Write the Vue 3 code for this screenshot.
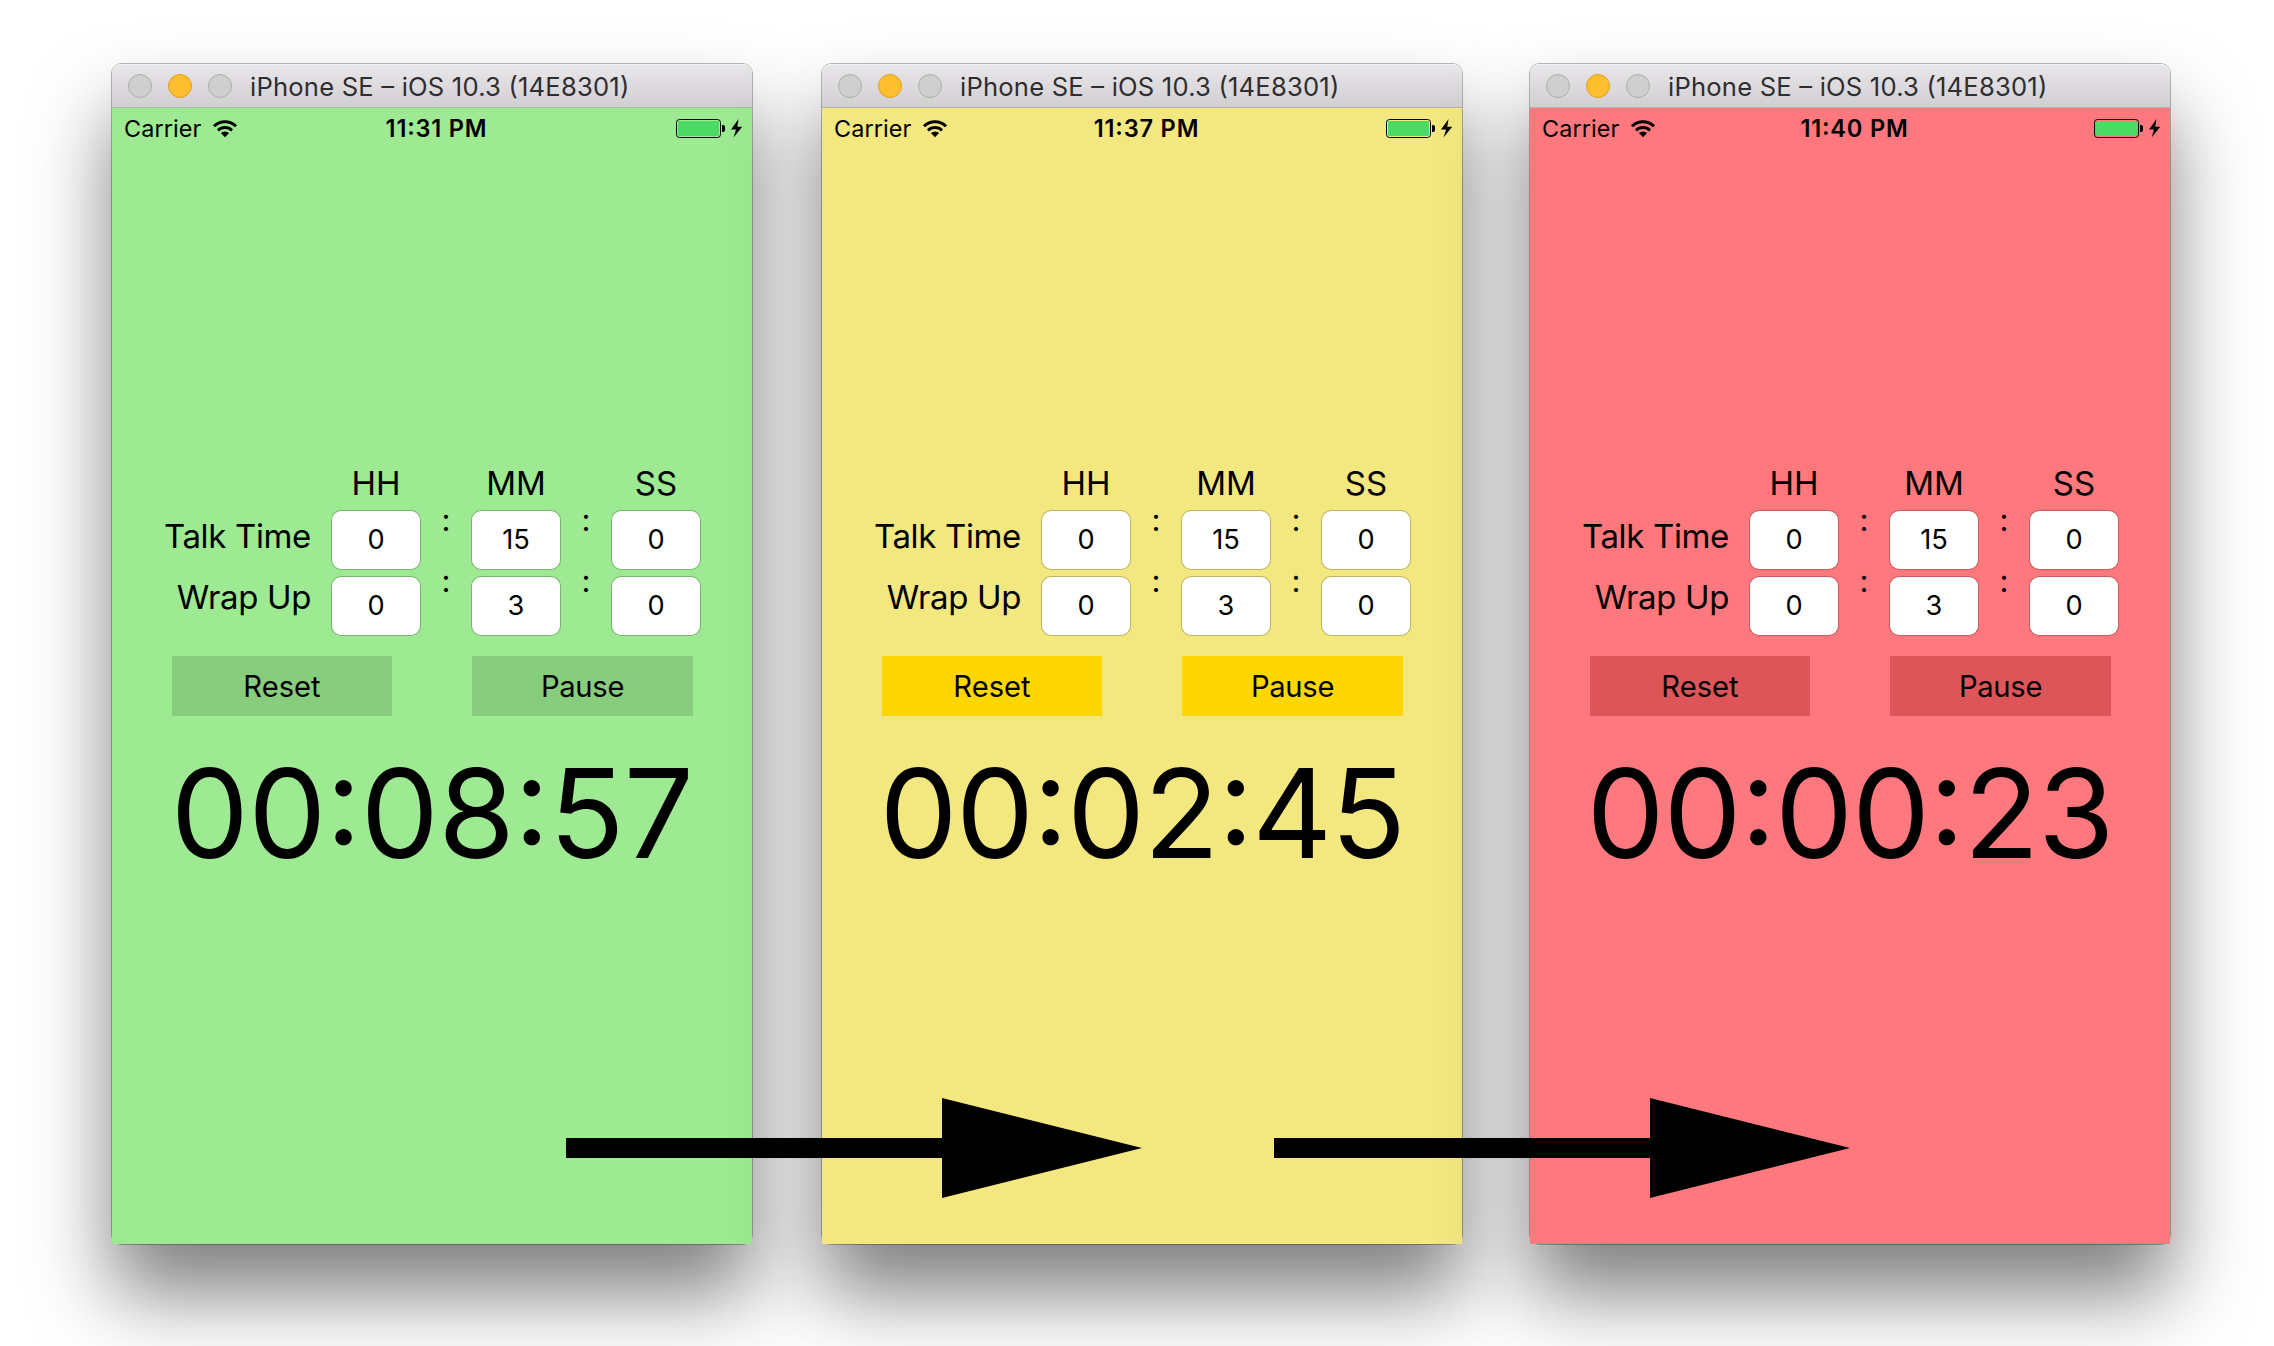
<script setup>
const title = 'iPhone SE – iOS 10.3 (14E8301)'
const columns = [
  { head: 'HH', talk: '0', wrap: '0' },
  { head: 'MM', talk: '15', wrap: '3' },
  { head: 'SS', talk: '0', wrap: '0' },
]
const phones = [
  { theme: 'green', clock: '11:31 PM', left: '00:08:57' },
  { theme: 'yellow', clock: '11:37 PM', left: '00:02:45' },
  { theme: 'red', clock: '11:40 PM', left: '00:00:23' },
]
</script>

<template>
  <main class="stage">
    <section v-for="p in phones" :key="p.theme" class="window" :class="p.theme">
      <header class="titlebar">
        <i class="light"></i>
        <i class="light amber"></i>
        <i class="light"></i>
        <span class="title">{{ title }}</span>
      </header>
      <div class="screen">
        <div class="status">
          <div class="side">
            <span class="carrier">Carrier</span>
            <svg class="wifi" width="26" height="19" viewBox="0 0 26 19">
              <path d="M2 7.2 A15.6 15.6 0 0 1 24 7.2" fill="none" stroke="#000" stroke-width="3" />
              <path d="M6 11.4 A9.9 9.9 0 0 1 20 11.4" fill="none" stroke="#000" stroke-width="2.8" />
              <path d="M13 18.2 L8.9 14.1 A5.8 5.8 0 0 1 17.1 14.1 Z" />
            </svg>
          </div>
          <span class="clock">{{ p.clock }}</span>
          <div class="side end">
            <svg class="battery" width="68" height="20" viewBox="0 0 68 20">
              <rect x="0.5" y="0.5" width="44" height="18" rx="3" fill="none" stroke="#000" />
              <rect x="2" y="2" width="41" height="15" rx="1.5" fill="#4cd964" />
              <path d="M46 6 h1 a2 2 0 0 1 2 2 v3 a2 2 0 0 1 -2 2 h-1 Z" />
              <path d="M62.6 0 L55 10.4 H60 L57.6 18.6 L66.2 7.8 H61.2 Z" />
            </svg>
          </div>
        </div>

        <div class="form">
          <div class="labels">
            <span>Talk Time</span>
            <span>Wrap Up</span>
          </div>
          <template v-for="(c, i) in columns" :key="c.head">
            <div v-if="i" class="colons"><span>:</span><span>:</span></div>
            <div class="column">
              <span class="head">{{ c.head }}</span>
              <div class="field">{{ c.talk }}</div>
              <div class="field">{{ c.wrap }}</div>
            </div>
          </template>
        </div>

        <div class="buttons">
          <button type="button">Reset</button>
          <button type="button" class="pause">Pause</button>
        </div>
        <div class="timer">{{ p.left }}</div>
      </div>
    </section>

    <svg class="arrows" width="2274" height="1346" viewBox="0 0 2274 1346">
      <path d="M566 1138 H942 V1098 L1142 1148 L942 1198 V1158 H566 Z" />
      <path d="M1274 1138 H1650 V1098 L1850 1148 L1650 1198 V1158 H1274 Z" />
    </svg>
  </main>
</template>

<style>
body {
  margin: 0;
  background: #fff;
}
</style>

<style scoped>
.stage {
  position: relative;
  display: flex;
  align-items: flex-start;
  box-sizing: border-box;
  width: 2274px;
  height: 1346px;
  padding: 64px 0 0 112px;
  overflow: hidden;
  font-family: Inter, "Liberation Sans", sans-serif;
  font-feature-settings: "calt" 1;
  color: #000;
}
.window {
  flex: none;
  width: 640px;
  margin-right: 68px;
  border-radius: 10px;
  box-shadow: 0 0 0 1px rgba(0, 0, 0, 0.27), 0 50px 80px rgba(0, 0, 0, 0.5);
}
.green { --bg: #9dea92; --btn: #88cd7e; --track: -0.65px; margin-right: 70px; }
.yellow { --bg: #f3e780; --btn: #ffd700; --track: -1.4px; }
.red { --bg: #ff787d; --btn: #dd5459; --track: -1.1px; margin-right: 0; }

.titlebar {
  display: flex;
  align-items: center;
  gap: 16px;
  box-sizing: border-box;
  height: 44px;
  padding-left: 16px;
  border-bottom: 1px solid #b3b1b4;
  border-radius: 9px 9px 0 0;
  background: linear-gradient(#e9e7ea, #d1cfd2);
  box-shadow: inset 0 1px 0 #f5f4f6;
}
.light {
  box-sizing: border-box;
  width: 24px;
  height: 24px;
  border: 1px solid #adadad;
  border-radius: 50%;
  background: #cfcfcf;
}
.light.amber {
  border-color: #dfa023;
  background: #ffbe2e;
}
.title {
  margin-left: 2px;
  padding-top: 2px;
  font-size: 25.6px;
  letter-spacing: 0.2px;
  color: #2e2d30;
  white-space: pre;
}
.screen {
  height: 1136px;
  background: var(--bg);
}
.status {
  display: flex;
  align-items: center;
  height: 40px;
  padding: 0 8px 0 12px;
}
.side {
  display: flex;
  flex: 1;
  align-items: center;
}
.end { justify-content: flex-end; }
.carrier {
  font-size: 23.4px;
  letter-spacing: 0.1px;
}
.wifi { margin-left: 11px; }
.battery { padding-top: 1px; }
.clock {
  margin-left: 5px;
  font-size: 23.6px;
  font-weight: 600;
  letter-spacing: 0.8px;
}
.form {
  display: flex;
  align-items: flex-start;
  padding-top: 315px;
}
.labels {
  display: flex;
  flex-direction: column;
  width: 199px;
  margin: 43px 20px 0 0;
  font-size: 33px;
  letter-spacing: -0.35px;
  line-height: 61px;
  text-align: right;
}
.column {
  display: flex;
  flex-direction: column;
  gap: 6px;
  width: 90px;
}
.head {
  margin-bottom: 1px;
  font-size: 33px;
  line-height: 40px;
  text-align: center;
}
.field {
  box-sizing: border-box;
  height: 60px;
  border: 1px solid rgba(0, 0, 0, 0.22);
  border-radius: 10px;
  background: #fff;
  background-clip: padding-box;
  font-size: 27.2px;
  line-height: 58px;
  text-align: center;
}
.colons {
  display: flex;
  flex-direction: column;
  width: 50px;
  margin-top: 26px;
  font-size: 31px;
  line-height: 61px;
  text-align: center;
}
.buttons {
  display: flex;
  gap: 80px;
  padding: 20px 59px 0 60px;
}
button {
  flex: none;
  width: 220px;
  height: 60px;
  padding: 2px 0 0;
  border: 0;
  background: var(--btn);
  font: 29.2px/58px Inter, "Liberation Sans", sans-serif;
  color: #000;
}
.pause {
  width: 221px;
  letter-spacing: -0.3px;
}
.timer {
  margin-top: 37px;
  font-size: 123.8px;
  letter-spacing: var(--track);
  line-height: 120px;
  text-align: center;
  white-space: pre;
}
.arrows {
  position: absolute;
  top: 0;
  left: 0;
}
</style>
